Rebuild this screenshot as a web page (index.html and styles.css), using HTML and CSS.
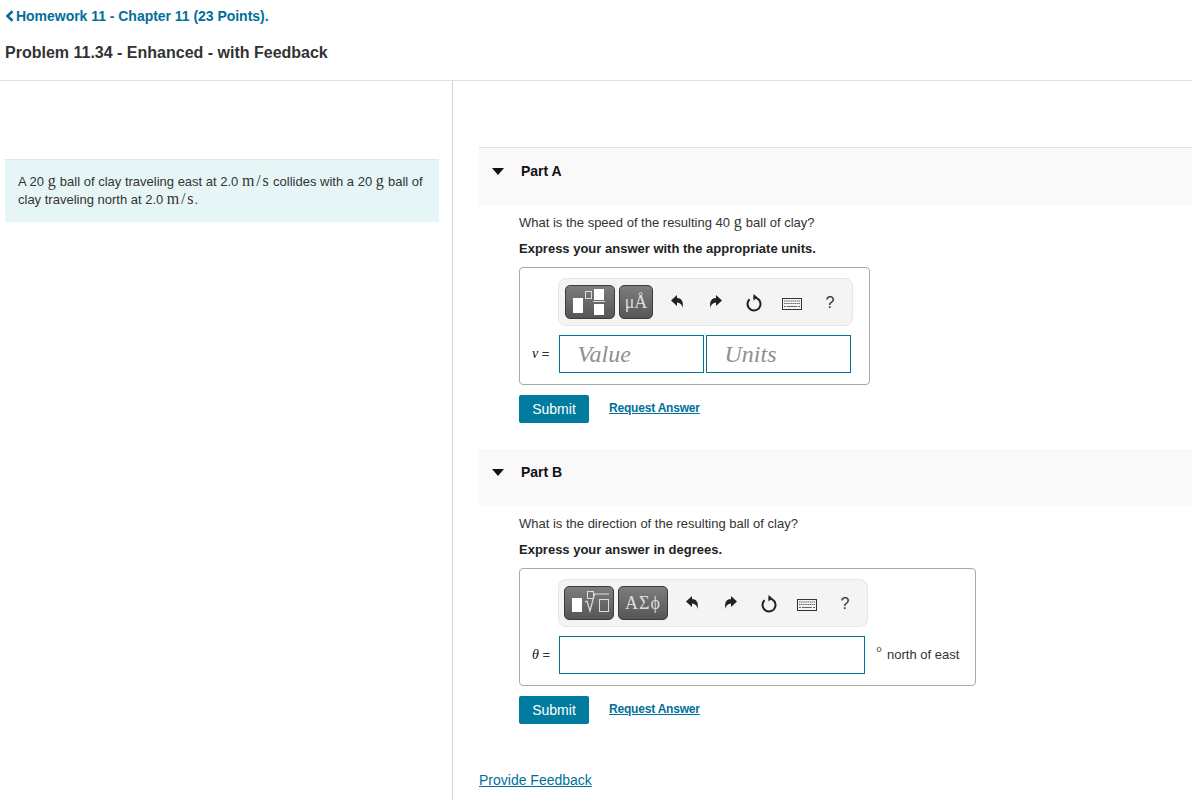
FILE: index.html
```html
<!DOCTYPE html>
<html lang="en">
<head>
<meta charset="utf-8">
<title>Problem 11.34</title>
<link rel="stylesheet" href="styles.css">
</head>
<body>
<header class="top">
  <a class="back" href="#"><svg class="chev" viewBox="0 0 9 12"><path d="M7.500 1.200 2.500 6l5 4.800" fill="none" stroke="#00709a" stroke-width="2.600"/></svg>Homework 11 - Chapter 11 (23 Points).</a>
  <h1 class="title">Problem 11.34 - Enhanced - with Feedback</h1>
</header>
<div class="main">
  <aside class="left">
    <div class="intro">A 20 <span class="m">g</span> ball of clay traveling east at 2.0 <span class="m ms">m/s</span> collides with a 20 <span class="m">g</span> ball of clay traveling north at 2.0 <span class="m ms">m/s</span>.</div>
  </aside>
  <section class="right">
    <div class="part-head"><svg class="tri" viewBox="0 0 12 7"><path d="M0 0h12L6 7z" fill="#111"/></svg><span>Part A</span></div>
    <div class="part-body">
      <p class="q">What is the speed of the resulting 40 <span class="m">g</span> ball of clay?</p>
      <p class="q strong">Express your answer with the appropriate units.</p>
      <div class="box box-a">
        <div class="toolbar tb-a">
          <button class="tplt"><svg class="glyph" viewBox="0 0 48 32"><rect x="7" y="12" width="10" height="15" fill="#fff"/><rect x="19.500" y="5.500" width="6" height="7" fill="none" stroke="#ddd"/><rect x="28" y="3" width="10" height="11" fill="#fff"/><rect x="27" y="15" width="12" height="1" fill="#ddd"/><rect x="28" y="18" width="10" height="11" fill="#fff"/></svg></button>
          <button class="tplt narrow"><span class="sym">μÅ</span></button>
          <span class="tools">
            <svg class="ic" viewBox="0 0 16 16"><path d="M2 5.500 8 0v3c4 0 7 3 5.500 10C13 9 11 8 8 7.500V11z" fill="#222"/></svg>
            <svg class="ic redo" viewBox="0 0 16 16"><path d="M14 5.500 8 0v3C4 3 1 6 2.500 13 3 9 5 8 8 7.500V11z" fill="#222"/></svg>
            <svg class="ic lg" viewBox="0 0 18 18"><path d="M4.600 5.200A6.500 6.500 0 1 0 8.500 3.500" fill="none" stroke="#222" stroke-width="2"/><path d="M8.500 0l4 3.200L8.500 6.500z" fill="#222"/></svg>
            <svg class="ic kb" viewBox="0 0 20 12"><rect x=".5" y=".5" width="19" height="11" fill="#f4f4f4" stroke="#333"/><path d="M2 3h16M2 5.500h16" stroke="#666" stroke-width="1.200" stroke-dasharray="1.500 .6"/><path d="M2 8.500h2M5 8.500h10M16 8.500h2" stroke="#666" stroke-width="1.200"/></svg>
            <span class="help">?</span>
          </span>
        </div>
        <div class="answer">
          <span class="var"><i>v</i> =</span>
          <span class="field value">Value</span>
          <span class="field units">Units</span>
        </div>
      </div>
      <div class="actions"><button class="submit">Submit</button><a class="req" href="#">Request Answer</a></div>
    </div>

    <div class="part-head second"><svg class="tri" viewBox="0 0 12 7"><path d="M0 0h12L6 7z" fill="#111"/></svg><span>Part B</span></div>
    <div class="part-body">
      <p class="q">What is the direction of the resulting ball of clay?</p>
      <p class="q strong">Express your answer in degrees.</p>
      <div class="box box-b">
        <div class="toolbar tb-b">
          <button class="tplt"><svg class="glyph" viewBox="0 0 48 32"><rect x="7" y="11" width="10" height="14" fill="#fff"/><rect x="22.500" y="4.500" width="6" height="7" fill="none" stroke="#ddd"/><path d="M20 15l2-1 3 10 4.500-17H44" fill="none" stroke="#ddd" stroke-width="1.200"/><rect x="34.500" y="12.500" width="9" height="12" fill="none" stroke="#ddd"/></svg></button>
          <button class="tplt"><span class="sym wide-sym">ΑΣϕ</span></button>
          <span class="tools">
            <svg class="ic" viewBox="0 0 16 16"><path d="M2 5.500 8 0v3c4 0 7 3 5.500 10C13 9 11 8 8 7.500V11z" fill="#222"/></svg>
            <svg class="ic redo" viewBox="0 0 16 16"><path d="M14 5.500 8 0v3C4 3 1 6 2.500 13 3 9 5 8 8 7.500V11z" fill="#222"/></svg>
            <svg class="ic lg" viewBox="0 0 18 18"><path d="M4.600 5.200A6.500 6.500 0 1 0 8.500 3.500" fill="none" stroke="#222" stroke-width="2"/><path d="M8.500 0l4 3.200L8.500 6.500z" fill="#222"/></svg>
            <svg class="ic kb" viewBox="0 0 20 12"><rect x=".5" y=".5" width="19" height="11" fill="#f4f4f4" stroke="#333"/><path d="M2 3h16M2 5.500h16" stroke="#666" stroke-width="1.200" stroke-dasharray="1.500 .6"/><path d="M2 8.500h2M5 8.500h10M16 8.500h2" stroke="#666" stroke-width="1.200"/></svg>
            <span class="help">?</span>
          </span>
        </div>
        <div class="answer">
          <span class="var"><i>θ</i> =</span>
          <span class="field wide"></span>
          <span class="unit-label"><span class="deg">°</span>north of east</span>
        </div>
      </div>
      <div class="actions"><button class="submit">Submit</button><a class="req" href="#">Request Answer</a></div>
    </div>
    <a class="feedback" href="#">Provide Feedback</a>
  </section>
</div>
</body>
</html>
```

FILE: styles.css
```css
* { box-sizing: border-box; }
html, body { margin: 0; padding: 0; }
body { font-family: "Liberation Sans", Arial, sans-serif; font-size: 13px; color: #333; background: #fff; }

.top { height: 81px; border-bottom: 1px solid #e0e0e0; padding: 8px 0 0 5px; }
.back { display: flex; align-items: center; height: 16px; font-size: 14px; font-weight: 700; color: #00709a; text-decoration: none; letter-spacing: -.03px; }
.chev { width: 9px; height: 12px; margin-right: 2px; flex: none; }
.title { margin: 20px 0 0; font-size: 16px; line-height: 18px; font-weight: 700; color: #333; }

.main { display: flex; min-height: 719px; }
.left { width: 453px; flex: none; border-right: 1px solid #c6d6e4; padding: 78px 13px 0 5px; }
.intro { background: #e6f6f7; border-top: 1px solid #dde6e8; height: 63px; padding: 13px 10px 0 13px; font-size: 13px; line-height: 18px; color: #333; }
.m { font-family: "Liberation Serif", serif; font-size: 16px; letter-spacing: .6px; line-height: 14px; }
.ms { letter-spacing: 1.800px; margin-right: -1px; }

.right { flex: 1; padding: 66px 0 0 26px; }
.part-head { height: 58px; background: #f9f9f9; border-top: 1px solid #e0e0e0; padding: 15px 0 0 13px; display: flex; align-items: flex-start; font-size: 14px; font-weight: 700; color: #111; line-height: 16px; }
.part-head.second { margin-top: 26px; height: 57px; border-top: 0; padding-top: 15px; }
.tri { width: 12px; height: 7px; margin: 5px 17px 0 0; flex: none; }
.part-body { padding-left: 40px; }
.q { margin: 9px 0 0; font-size: 13px; line-height: 17px; color: #333; white-space: nowrap; }
.strong { font-weight: 700; color: #222; }

.box { border: 1px solid #aaa; border-radius: 4px; margin-top: 10px; height: 118px; padding: 10px 0 0 38px; }
.box-a { width: 351px; }
.box-b { width: 457px; }
.toolbar { display: flex; align-items: center; height: 48px; background: #f4f4f4; border: 1px solid #e6e6e6; border-radius: 8px; padding-left: 6px; }
.tb-a { width: 295px; }
.tb-b { width: 310px; padding-left: 5px; }
.tplt { width: 50px; height: 34px; padding: 0; margin-right: 4px; border: 1px solid #3a3a3a; border-radius: 5px; background: linear-gradient(#7d7d7d, #565656); display: flex; align-items: center; justify-content: center; flex: none; }
.tplt.narrow { width: 34px; }
.glyph { width: 48px; height: 32px; display: block; }
.sym { font-family: "Liberation Serif", serif; font-size: 18px; color: #ddd; white-space: nowrap; }
.wide-sym { letter-spacing: 1px; }
.tools { display: flex; align-items: center; margin-left: 1px; }
.ic { width: 16px; height: 16px; margin: 2px 11px 0; flex: none; }
.ic.redo { margin: 2px 11px 0 12px; }
.ic.lg { width: 18px; height: 18px; margin: 2px 10px 0; }
.ic.kb { width: 20px; height: 12px; margin: 3px 9px 0; }
.help { width: 38px; text-align: center; font-size: 16px; color: #333; padding-top: 1px; }

.answer { display: flex; align-items: center; margin: 9px 0 0 -27px; height: 38px; }
.var { width: 28px; font-size: 13px; color: #333; flex: none; padding-left: 1px; }
.var i { font-family: "Liberation Serif", serif; font-size: 14px; color: #111; }
.field { display: block; width: 145px; height: 38px; border: 1px solid #00789c; background: #fff; font: italic 24px/36px "Liberation Serif", serif; color: #8f8f8f; padding-left: 17.500px; flex: none; }
.units { margin-left: 2px; }
.wide { width: 306px; }
.unit-label { display: flex; margin: 0 0 2px 11px; font-size: 13px; color: #333; white-space: nowrap; }
.deg { font: 15px/12px "Liberation Serif", serif; margin: -1px 5px 0 0; }

.actions { display: flex; align-items: center; margin-top: 10px; }
.submit { width: 70px; height: 28px; border: 0; border-radius: 2px; background: #007c9e; color: #fff; font: 14px "Liberation Sans", Arial, sans-serif; padding: 0; }
.req { margin-left: 20px; font-size: 12px; font-weight: 700; color: #00709a; text-decoration: underline; position: relative; top: -1px; letter-spacing: -.2px; }
.feedback { display: block; margin-top: 48px; font-size: 14px; line-height: 16px; color: #00709a; text-decoration: underline; }
```
